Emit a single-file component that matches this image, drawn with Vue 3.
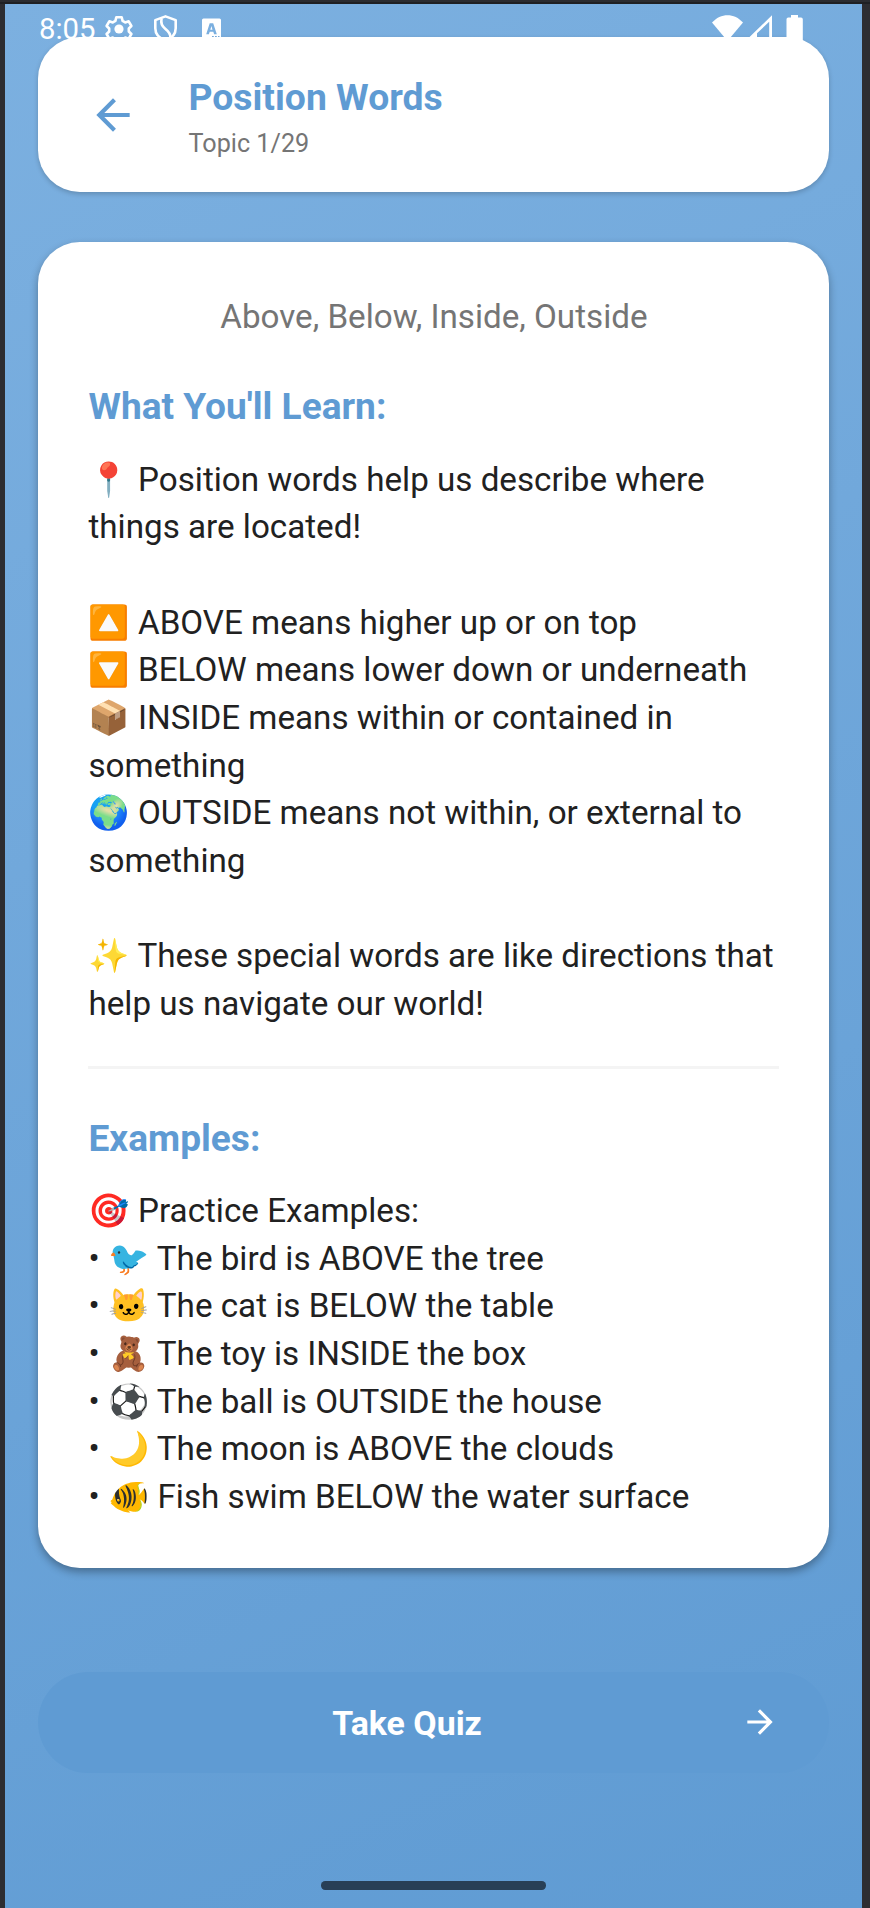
<script setup>
const lesson = [
  '📍 Position words help us describe where',
  'things are located!',
  '',
  '🔼 ABOVE means higher up or on top',
  '🔽 BELOW means lower down or underneath',
  '📦 INSIDE means within or contained in',
  'something',
  '🌍 OUTSIDE means not within, or external to',
  'something',
  '',
  '✨ These special words are like directions that',
  'help us navigate our world!',
]
const examples = [
  '🎯 Practice Examples:',
  '• 🐦 The bird is ABOVE the tree',
  '• 🐱 The cat is BELOW the table',
  '• 🧸 The toy is INSIDE the box',
  '• ⚽ The ball is OUTSIDE the house',
  '• 🌙 The moon is ABOVE the clouds',
  '• 🐠 Fish swim BELOW the water surface',
]
</script>

<template>
  <div class="device">
    <div class="screen">
      <header class="topbar card">
        <svg class="back" viewBox="0 0 24 24"><path d="M20 11H7.83l5.59-5.59L12 4l-8 8 8 8 1.41-1.41L7.83 13H20v-2z" fill="#5f9bd3" /></svg>
        <div>
          <h1>Position Words</h1>
          <p class="topic">Topic 1/29</p>
        </div>
      </header>

      <main class="content card">
        <p class="subtitle">Above, Below, Inside, Outside</p>
        <h2>What You'll Learn:</h2>
        <div class="body"><div v-for="(l, i) in lesson" :key="i" class="line">{{ l }}</div></div>
        <hr />
        <h2 class="second">Examples:</h2>
        <div class="body"><div v-for="(l, i) in examples" :key="i" class="line">{{ l }}</div></div>
      </main>

      <button class="quiz">
        <span>Take Quiz</span>
        <svg class="next" viewBox="0 0 24 24"><path d="M12 4l-1.41 1.41L16.17 11H4v2h12.17l-5.58 5.59L12 20l8-8z" fill="#fff" /></svg>
      </button>
      <div class="pill"></div>
    </div>

    <div class="status">
      <span class="clock">8:05</span>
      <svg class="sysicons" width="870" height="44" viewBox="0 0 870 44">
        <g fill="none" stroke="#fff" stroke-width="2.6" stroke-linejoin="round">
          <path d="M116.3 17.3h5.4l.9 3.6 2.6 1.5 3.5-1.1 2.7 4.7-2.6 2.5v3l2.6 2.5-2.7 4.7-3.5-1.1-2.6 1.5h-7.2l-2.6-1.5-3.5 1.1-2.7-4.7 2.6-2.5v-3l-2.6-2.5 2.7-4.7 3.5 1.1 2.6-1.5z" />
          <path d="M165.5 16.4l10.2 3.7v8.2c0 5.3-3.8 10-10.2 12.2-6.4-2.2-10.2-6.9-10.2-12.2v-8.2z" />
          <path d="M161.6 18.5c-1.2 5 .2 7.5 3.6 10.2 3.6 2.8 5.5 5.3 5.2 9" />
        </g>
        <circle cx="119" cy="29" r="4.6" fill="#fff" />
        <path fill="#fff" fill-rule="evenodd" d="M203.5 18.500h16a1.500 1.500 0 0 1 1.500 1.500v18h-19v-18a1.500 1.500 0 0 1 1.500-1.500zM209.700 23.200l-3.500 11h2.700l.8-2.400h3.600l.8 2.400h2.700l-3.600-11zm1.700 2.900l1.100 3.600h-2.200zM212 36h1.800v1.500h-1.800zM215 36h1.800v1.500h-1.800zM218 36h1.500v1.500h-1.500z" />
        <path fill="#fff" d="M712 22.500c8.700-9.800 22.400-9.800 31 0L727.500 41z" />
        <path fill="#fff" fill-rule="evenodd" d="M772 15.200V38h-23.500zM769.200 21.800L757 33.300V38h12.200z" />
        <path fill="#fff" d="M791 15h7v2.500h3a1.800 1.800 0 0 1 1.800 1.800V41.500H786.500V19.300a1.800 1.800 0 0 1 1.800-1.800H791z" />
      </svg>
    </div>
  </div>
</template>

<style>
body { margin: 0; background: #2d2d31; }
</style>

<style scoped>
.device {
  position: relative;
  box-sizing: border-box;
  width: 870px;
  height: 1908px;
  padding: 4px 8px 0 5px;
  background: linear-gradient(#2b2c30 0 2px, #1f2023 2px 4px, #2d2d31 4px);
  font-family: Roboto, "Noto Color Emoji", sans-serif;
  overflow: hidden;
}
.screen {
  box-sizing: border-box;
  height: 1904px;
  padding: 33.3px 33.3px 0;
  background: linear-gradient(155.8deg, #7cb0e0, #5f9bd3);
  display: flex;
  flex-direction: column;
}
.card {
  box-sizing: border-box;
  background: #fff;
  border-radius: 41.8px;
}
.topbar {
  height: 154.4px;
  flex: none;
  display: flex;
  padding-left: 50px;
  box-shadow: 0 2px 5px rgba(0, 0, 0, 0.2);
}
.back { width: 50px; height: 50px; margin: 52.3px 50.2px 0 0; }
h1, h2, p { margin: 0; }
h1 {
  margin-top: 38px;
  font-size: 37.3px;
  line-height: 44px;
  font-weight: 700;
  color: #5f9bd3;
}
.topic { margin-top: 10px; font-size: 25.2px; line-height: 30px; color: #757575; }
.content {
  flex: none;
  height: 1325.6px;
  margin-top: 50.6px;
  padding: 51px 49.4px 0 50.2px;
  box-shadow: 0 4px 9px rgba(0, 0, 0, 0.33);
}
.subtitle { font-size: 33.2px; line-height: 48px; text-align: center; color: #757575; }
h2 { margin-top: 43.8px; font-size: 37.1px; line-height: 44px; font-weight: 700; color: #5f9bd3; }
h2.second { margin-top: 48px; }
.body { margin-top: 26.5px; font-size: 33.2px; line-height: 47.67px; color: #212121; }
.line { height: 47.67px; white-space: pre; }
hr { height: 2.5px; margin: 38.7px 0 0; border: 0; background: #f4f4f4; }
.quiz {
  position: relative;
  flex: none;
  height: 101px;
  margin-top: 104.1px;
  padding: 0;
  border: 0;
  border-radius: 50.5px;
  background: #5f9bd3;
  color: #fff;
  font: 700 33.9px/103px Roboto, sans-serif;
  display: flex;
  justify-content: center;
}
.quiz span { margin-right: 53px; }
.next { position: absolute; right: 50px; top: 31.5px; width: 38px; height: 38px; }
.pill { width: 225px; height: 8.3px; margin: 108.5px 0 0 282.7px; border-radius: 4.2px; background: #283f56; }
.status { position: absolute; inset: 0 0 auto 0; height: 44px; }
.clock { position: absolute; left: 39px; top: 11px; font-size: 29.3px; line-height: 36px; color: #fff; }
.sysicons { position: absolute; left: 0; top: 0; }
</style>
